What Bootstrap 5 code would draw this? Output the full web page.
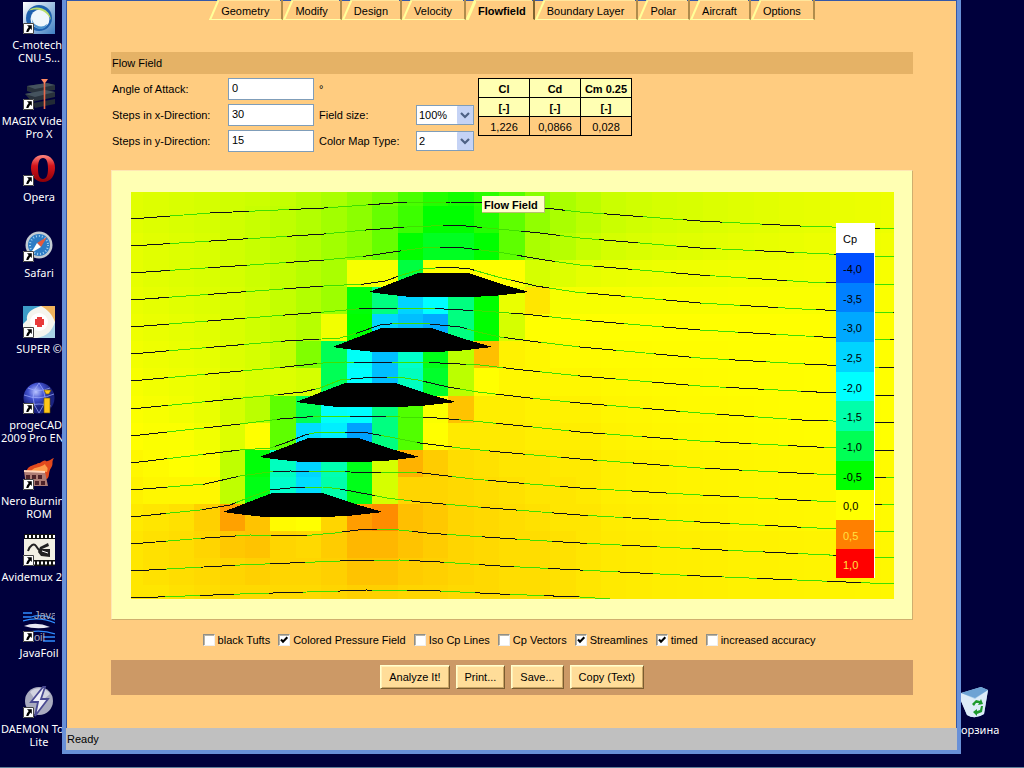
<!DOCTYPE html>
<html lang="en">
<head>
<meta charset="utf-8">
<meta name="viewport" content="width=device-width, initial-scale=1">
<title>JavaFoil - Flowfield</title>
<link href="https://cdn.jsdelivr.net/npm/bootstrap@5.3.0/dist/css/bootstrap.min.css" rel="stylesheet">
<style>
body { background: #00003c; color: #000; font: 11px/13px "Liberation Sans", Arial, sans-serif; }
.desk-col { flex: 0 0 62px; padding-top: 2px; }
.desk-item { width: 76px; height: 76px; color: #fff; text-decoration: none; text-align: center; font-family: "Noto Sans", sans-serif; white-space: nowrap; margin-left: 1px; }
.desk-item svg { width: 32px; height: 32px; display: block; margin: 0 auto 4px; }
.desk-item .run-on { display: block; width: 61px; text-align: right; }
.desk-right { flex: 0 0 63px; }
.desk-right .desk-item { width: 63px; margin-left: 0; text-align: left; }
.desk-right .desk-item svg { margin-left: 0; }
.app-window { background: #ffcc80; border: 4px double #5b85d6; border: 4px solid #6890d8; border-top: 0; box-shadow: inset 0 0 0 1px #3558a8; margin-bottom: 13px; }
.task-edge { height: 2px; background: #5f7f99; }
.inner { padding: 0 44px 0 45px; }
.tab-item { position: relative; display: block; height: 20px; padding: 5px 12px 0 12px; color: #000; text-decoration: none; border-bottom: 1px solid #ffffa8; border-right: 2px solid #b08c4c; }
.tab-item svg { position: absolute; left: 0; top: 0; width: 10px; height: 20px; }
.tab-item::before { content: ""; position: absolute; left: 10px; right: 1px; top: 0; height: 1px; background: #ffe69c; }
.tab-item.current { font-weight: bold; padding-right: 7px; border-right-color: #7e6430; border-bottom-color: #ffcc80; }
.section-bar { background: #e5b266; height: 22px; line-height: 22px; padding-left: 1px; margin: 32px 0 4px; font-weight: normal; font-size: 11px; }
.form-grid { display: grid; grid-template-columns: 117px 86px 102px 58px; grid-auto-rows: 22px; row-gap: 4px; align-items: center; }
.form-grid label { padding-left: 1px; }
.form-grid .second { padding-left: 5px; }
.box { background: #fff; border: 1px solid #7f9db9; border-radius: 0; height: 22px; width: 100%; padding: 0 3px 2px; color: #000; font: inherit; appearance: none; }
.pick { position: relative; }
.pick .box { height: 20px; padding: 0 2px; }
.pick svg { position: absolute; right: 1px; top: 1px; width: 16px; height: 18px; pointer-events: none; }
.coef { border-collapse: collapse; margin: 0 0 0 4px; text-align: center; }
.coef th, .coef td { border: 1px solid #000; height: 19px; width: 51px; padding: 2px 0 0; line-height: 13px; white-space: nowrap; }
.coef th { background: #ffffb3; }
.plot-panel { background: #ffffb3; border: 1px solid #ffe6b3; border-right-color: #cfae6e; border-bottom-color: #cfae6e; padding: 21px 18px 20px 19px; margin-top: 18px; }
.plot-area { position: relative; }
.plot-area > svg { display: block; width: 100%; height: auto; }
.plot-title { position: absolute; left: 46%; top: 4px; height: 17px; line-height: 19px; width: 63px; padding-left: 2px; font-weight: bold; font-size: 11px; background: #ffffcc; border-bottom: 1px solid #b8c070; border-right: 1px solid #b8c070; margin: 0; }
.legend-box { position: absolute; right: 19px; top: 31px; width: 39px; border-right: 1px solid #fff; background: #fff; }
.legend-box li { height: 30px; line-height: 33px; padding-left: 7px; }
.legend-box li:nth-child(3n), .legend-box li:nth-child(11) { height: 29px; }
.legend-box .hot { color: #ffe040; }
.checks { gap: 8px; height: 40px; padding-right: 6px; }
.checks label { display: flex; align-items: center; gap: 3px; }
.tick { appearance: none; width: 12px; height: 12px; margin: 0; background: #fff; border: 1px solid #8f8f88; border-right-color: #eee; border-bottom-color: #eee; box-shadow: inset 1px 1px #b8b4a8; }
.tick:checked { background: #fff url("data:image/svg+xml,%3Csvg xmlns='http://www.w3.org/2000/svg' viewBox='0 0 10 10'%3E%3Cpath d='M2 4.5 4 6.7 8.3 2.2' fill='none' stroke='%23000' stroke-width='2.1'/%3E%3C/svg%3E") center / 10px 10px no-repeat; }
.button-bar { background: #cc9966; height: 35px; gap: 6px; padding-top: 5px; }
.push { height: 24px; padding: 0 8px; font: inherit; color: #000; background: #ffdd99; border: 1px solid; border-color: #ffffcc #7a5c30 #7a5c30 #ffffcc; border-radius: 0; box-shadow: inset 1px 1px #fff0b8, inset -1px -1px #c9a566; }
.status { background: #c0c0c0; height: 22px; line-height: 22px; padding-left: 1px; margin-top: 33px; }
</style>
</head>
<body>
<svg class="d-none" aria-hidden="true">
  <symbol id="shortcut" viewBox="0 0 11 11"><rect width="11" height="11" fill="#fff"/><path d="M.5.5h10v10H.5z" fill="none" stroke="#444"/><path d="M4 2.2h4.8V7L7.300 5.500 5.300 9H3.200l.8-2.500 1.700-2.600z" fill="#000"/></symbol>
</svg>
<div class="d-flex flex-column min-vh-100">
<div class="d-flex flex-fill">
  <nav class="desk-col overflow-hidden" aria-label="Desktop">
    <a class="desk-item d-block" href="#"><svg viewBox="0 0 32 32"><defs><linearGradient id="g1" x2="1" y2="1"><stop stop-color="#fff"/><stop offset="1" stop-color="#3f7fc4"/></linearGradient></defs><rect width="32" height="32" fill="url(#g1)"/><circle cx="16" cy="16" r="13" fill="#1d5fae"/><circle cx="17" cy="17" r="9.500" fill="#eef6fb"/><path d="M5 9a14 14 0 0 1 23 9C24 9 15 5 5 9z" fill="#b9dd6a"/><path d="M9 14a9 9 0 0 0 15 8c-1 8-17 7-15-8z" fill="#4b93cf"/><use href="#shortcut" y="21" width="11" height="11"/></svg><span class="run-on">C-motech</span>CNU-5...</a>
    <a class="desk-item d-block" href="#"><svg viewBox="0 0 32 32"><path d="M4 8l20-3 8 2v5L10 15l-6-2zM2 16l20-4 10 2v5L9 24z" fill="#29323c"/><path d="M4 8l20-3 8 2-20 4zM2 16l20-4 10 2-20 5z" fill="#45535e"/><path d="M10 25l22-4v5l-20 4z" fill="#222a35"/><path d="M21.500 5v26" stroke="#e8694a" stroke-width="1.600"/><path d="M18 1h7l-3.500 5z" fill="#ff8a63"/><use href="#shortcut" y="21" width="11" height="11"/></svg><span class="run-on">MAGIX Vide</span>Pro X</a>
    <a class="desk-item d-block" href="#"><svg viewBox="0 0 32 32"><defs><linearGradient id="g3" x2="0" y2="1"><stop stop-color="#ff8a82"/><stop offset=".4" stop-color="#d4151c"/><stop offset="1" stop-color="#8b0008"/></linearGradient></defs><path fill-rule="evenodd" d="M20 1c8 0 12 6 12 13s-4 14-12 14S8 21 8 14 12 1 20 1zm0 3c-3.500 0-5 4-5 10.500S16.500 25 20 25s5-4 5-10.500S23.500 4 20 4z" fill="url(#g3)"/><use href="#shortcut" y="21" width="11" height="11"/></svg>Opera</a>
    <a class="desk-item d-block" href="#"><svg viewBox="0 0 32 32"><circle cx="16" cy="15" r="13.500" fill="#c3cbd2"/><circle cx="16" cy="15" r="11" fill="#2d7cc4"/><circle cx="16" cy="15" r="9" fill="none" stroke="#9fd0f2" stroke-dasharray="1 2" stroke-width="2"/><path d="M24 7l-6 10-4-4z" fill="#e45a3c"/><path d="M8 23l6-10 4 4z" fill="#fff"/><use href="#shortcut" y="21" width="11" height="11"/></svg>Safari</a>
    <a class="desk-item d-block" href="#"><svg viewBox="0 0 32 32"><rect width="32" height="32" fill="#f5f5ee"/><path d="M0 0h18C8 3 3 7 4 14L0 18z" fill="#3d9cc8"/><path d="M18 0h14v16C29 8 25 4 18 0z" fill="#f0b35c"/><path d="M32 16v16H14c10-2 15-7 18-16z" fill="#a9d3e6"/><circle cx="16" cy="16" r="9" fill="#fff"/><path d="M14 11h5v2h2v6h-2v2h-5v-2h-2v-6h2z" fill="#e83b3b"/><use href="#shortcut" y="21" width="11" height="11"/></svg><span class="run-on">SUPER ©</span></a>
    <a class="desk-item d-block" href="#"><svg viewBox="0 0 32 32"><defs><radialGradient id="g6" cx=".4" cy=".3"><stop stop-color="#b9c4ff"/><stop offset=".5" stop-color="#4353d0"/><stop offset="1" stop-color="#1a2280"/></radialGradient></defs><circle cx="16" cy="16" r="15.500" fill="url(#g6)"/><path d="M1 13q15 6 30-1M4 24q12-4 24 0M16 1q-12 14 0 30M16 1q12 14 0 30M5 6q11 5 22 0" fill="none" stroke="#a3b0ff" stroke-width=".7"/><path d="M21 8h7l-2 4h-3zM21 16h6v15h-6z" fill="#ffc61a" stroke="#6a5000" stroke-width=".6"/><use href="#shortcut" y="21" width="11" height="11"/></svg><span class="run-on">progeCAD</span><span class="run-on">2009 Pro EN</span></a>
    <a class="desk-item d-block" href="#"><svg viewBox="0 0 32 32"><path d="M3 16C4 6 12 8 15 5c3 1 5-4 8-2 2 1 5-2 8-3-3 4 0 6-3 10s-1 9-4 11z" fill="#e2491d"/><path d="M8 13c4-5 10-3 14-7 1 4 4 2 2 8z" fill="#ff9c4a"/><path d="M1 13l21 1 3 14H3z" fill="#ad7c74"/><path d="M3 17h4v4H3zM9 17h4v4H9zM15 17h4v4h-4zM12 23h4v4h-4zM18 23h4v4h-4z" fill="#4d2228"/><path d="M1 13l21 1" stroke="#ffd5ba" stroke-width="2"/><use href="#shortcut" y="21" width="11" height="11"/></svg><span class="run-on">Nero Burnin</span>ROM</a>
    <a class="desk-item d-block" href="#"><svg viewBox="0 0 32 32"><rect x="1" width="31" height="32" fill="#111"/><rect x="1" y="5" width="31" height="21" fill="#f2f0e4"/><path d="M2 2.500h30M2 29h30" stroke="#fff" stroke-width="3" stroke-dasharray="2 2"/><path d="M5 17c2-6 6-8 8-5s4 7 8 4" fill="none" stroke="#222" stroke-width="2"/><path d="M17 13l8-4 1 3-7 3h8v8l-9-1-3-4z" fill="#222"/><path d="M19 17l6 2" stroke="#fff"/><use href="#shortcut" y="21" width="11" height="11"/></svg><span class="run-on">Avidemux 2</span></a>
    <a class="desk-item d-block" href="#"><svg viewBox="0 0 32 32"><path d="M0 3h9M0 7h8Q20 3 32 10M0 11q16-5 32 2M0 23q18-4 32 1M20 27h12M20 31h12" fill="none" stroke="#2f8cff" stroke-width="1.300"/><text x="11" y="9" font-size="11" fill="#aab" font-family="Liberation Sans">Java</text><path d="M1 16q12-5 26 1-14 3-26-1z" fill="#e8e8f4"/><text x="11" y="31" font-size="11" fill="#aab" font-family="Liberation Sans">oil</text><use href="#shortcut" y="21" width="11" height="11"/></svg>JavaFoil</a>
    <a class="desk-item d-block" href="#"><svg viewBox="0 0 32 32"><circle cx="16" cy="15" r="14" fill="#a9abbf"/><path d="M7 6a13 13 0 0 1 20 2L15 18z" fill="#d3d4e0"/><path d="M20 1L8 16h7l-3 14L25 13h-7l4-12z" fill="#efeff8" stroke="#4a4a92" stroke-width="1.800"/><use href="#shortcut" y="21" width="11" height="11"/></svg><span class="run-on">DAEMON To</span>Lite</a>
  </nav>

  <main class="app-window flex-fill d-flex flex-column">
    <div class="inner flex-fill">
      <nav class="d-flex justify-content-center" id="tabs" aria-label="Sections">
        <a class="tab-item" href="#">Geometry</a>
        <a class="tab-item" href="#">Modify</a>
        <a class="tab-item" href="#">Design</a>
        <a class="tab-item" href="#">Velocity</a>
        <a class="tab-item current" href="#" aria-current="page">Flowfield</a>
        <a class="tab-item" href="#">Boundary Layer</a>
        <a class="tab-item" href="#">Polar</a>
        <a class="tab-item" href="#">Aircraft</a>
        <a class="tab-item" href="#">Options</a>
      </nav>
      <h1 class="section-bar">Flow Field</h1>
      <div class="d-flex align-items-start">
        <div class="form-grid">
          <label for="aoa">Angle of Attack:</label><input class="box" id="aoa" value="0"><span class="second">°</span><span></span>
          <label for="nx">Steps in x-Direction:</label><input class="box" id="nx" value="30">
          <label class="second" for="size">Field size:</label>
          <span class="pick"><select class="box" id="size"><option>100%</option></select><svg viewBox="0 0 16 18"><rect width="16" height="18" rx="1" fill="#c5d3f5"/><path d="M4 7l4 4 4-4" fill="none" stroke="#4d6185" stroke-width="2.200"/></svg></span>
          <label for="ny">Steps in y-Direction:</label><input class="box" id="ny" value="15">
          <label class="second" for="map">Color Map Type:</label>
          <span class="pick"><select class="box" id="map"><option>2</option></select><svg viewBox="0 0 16 18"><rect width="16" height="18" rx="1" fill="#c5d3f5"/><path d="M4 7l4 4 4-4" fill="none" stroke="#4d6185" stroke-width="2.200"/></svg></span>
        </div>
        <table class="coef">
          <thead><tr><th>Cl</th><th>Cd</th><th>Cm 0.25</th></tr><tr><th>[-]</th><th>[-]</th><th>[-]</th></tr></thead>
          <tbody><tr><td>1,226</td><td>0,0866</td><td>0,028</td></tr></tbody>
        </table>
      </div>

      <section class="plot-panel">
        <div class="plot-area">
          <svg id="field" viewBox="131 192 763 407" shape-rendering="crispEdges" role="img" aria-label="Pressure field with streamlines"></svg>
          <h2 class="plot-title">Flow Field</h2>
          <ul class="legend-box list-unstyled m-0" id="legend"></ul>
        </div>
      </section>

      <div class="checks d-flex justify-content-center align-items-center">
        <label><input class="tick" type="checkbox">black Tufts</label>
        <label><input class="tick" type="checkbox" checked>Colored Pressure Field</label>
        <label><input class="tick" type="checkbox">Iso Cp Lines</label>
        <label><input class="tick" type="checkbox">Cp Vectors</label>
        <label><input class="tick" type="checkbox" checked>Streamlines</label>
        <label><input class="tick" type="checkbox" checked>timed</label>
        <label><input class="tick" type="checkbox">increased accuracy</label>
      </div>
      <div class="button-bar d-flex justify-content-center">
        <button class="push" type="button">Analyze It!</button>
        <button class="push" type="button">Print...</button>
        <button class="push" type="button">Save...</button>
        <button class="push" type="button">Copy (Text)</button>
      </div>
    </div>
    <footer class="status">Ready</footer>
  </main>

  <aside class="desk-col desk-right d-flex flex-column justify-content-end overflow-hidden" aria-label="Desktop">
    <a class="desk-item d-block mb-1" href="#"><svg viewBox="0 0 32 32"><path d="M0 6L20 0l7 3-4 24q-9 6-17 1L0 14z" fill="#a9cdea"/><path d="M0 6l14 6 13-9-4 24q-9 6-17 1L0 14z" fill="#dcecf8"/><path d="M0 6L20 0l7 3-13 8z" fill="#6da3d4"/><path d="M11 17l4-4 4 1 1-2 2 5-5 1 1-2h-3l-2 3zM22 19l-1 6-5 2v2l-4-4 4-3v2l3-1 1-4z" fill="#1d9a2c"/></svg>орзина</a>
  </aside>
</div>
<div class="task-edge"></div>
</div>

<script src="https://cdn.jsdelivr.net/npm/bootstrap@5.3.0/dist/js/bootstrap.bundle.min.js"></script>
<script>
const NS = 'http://www.w3.org/2000/svg';
const field = document.getElementById('field');
function add(parent, name, attrs) {
  const el = document.createElementNS(NS, name);
  for (const k in attrs) el.setAttribute(k, attrs[k]);
  parent.appendChild(el);
}
// Hue of each field cell; the last number is the hue reached at the right edge.
const hues = [
  [67,68,69,70,71,72,74,77,80,86,92,103,112,116,110,100,88,80,76,64],
  [67,68,69,70,71,73,75,78,82,87,96,106,120,120,112,98,86,80,76,64],
  [66,67,68,69,71,73,75,78,82,87,96,120,128,128,120,98,80,77,73,63],
  [66,67,68,69,70,72,74,77,80,62,62,135,60,60,60,60,70,68,66,62],
  [65,66,67,68,69,71,74,78,83,122,150,190,180,150,120,65,54,62,62,61],
  [64,65,66,67,69,71,73,77,63,120,190,195,200,150,120,70,60,60,60,60],
  [63,64,65,66,68,70,74,90,140,178,195,168,126,76,45,57,58,59,59,60],
  [62,63,64,65,67,69,68,70,140,180,195,165,130,76,60,58,58,58,58,60],
  [61,62,63,65,70,76,98,140,178,180,150,101,61,46,56,56,57,57,57,60],
  [60,61,61,63,68,60,98,188,184,202,150,101,60,55,55,55,56,56,56,60],
  [58,59,60,61,75,122,165,190,162,126,70,42,48,52,53,54,54,55,55,59],
  [57,58,58,58,75,125,168,188,160,126,70,50,50,51,52,53,54,54,55,59],
  [55,54,53,49,38,46,59,60,50,37,33,45,47,50,51,52,53,54,54,59],
  [54,53,52,50,47,46,50,51,48,43,43,46,48,50,51,52,52,53,54,58],
  [54,53,52,51,50,49,50,50,49,46,46,48,49,50,51,52,52,53,54,58],
  [54,54,53,52,51,51,51,51,50,49,49,50,50,51,51,52,52,53,54,58]
];
const dx = 763 / 30, dy = 407 / 15;
hues.forEach((row, r) => {
  const y0 = Math.round(r ? 192 + dy * (r - 0.5) : 192), y1 = Math.round(Math.min(599, 192 + dy * (r + 0.5)));
  for (let c = 0; c <= 30; c++) {
    const x0 = Math.floor(c ? 131 + dx * (c - 0.5) : 131), x1 = Math.floor(Math.min(894, 131 + dx * (c + 0.5)));
    const far = Math.sqrt(Math.max(0, c - 18) / 12);
    const h = c < 19 ? row[c] : row[18] + (row[19] - row[18]) * far;
    add(field, 'rect', { x: x0, y: y0, width: x1 - x0, height: y1 - y0, fill: `hsl(${h},100%,50%)` });
  }
});
const lines = [
  '131,219 210,213 324,208 366,205 407,202 450,202 483,203 545,208 580,212 700,221 800,226 894,229',
  '131,246 324,234 366,230 407,227 455,225 498,229 540,233 580,238 700,248 807,253 894,257',
  '131,273 324,260 366,256 407,250 430,247 455,247 498,252 545,260 580,265 700,275 808,282 894,285',
  '131,300 324,286 364,284 385,281 402,275 423,269 447,267 470,269 498,277 536,286 575,292 700,303 802,309 894,313',
  '131,327 324,312 346,310 367,308 425,308 482,311 523,314 580,320 700,330 823,337 894,340',
  '131,354 285,341 340,338 360,332 380,325 400,323 420,323 460,327 478,332 500,337 530,341 580,347 700,358 805,364 894,368',
  '131,381 285,367 323,363 345,362 440,363 480,365 523,370 580,376 700,386 894,396',
  '131,409 284,394 303,392 320,388 340,380 374,377 398,377 418,380 435,384 448,387 478,392 530,398 580,403 700,413 802,420 894,423',
  '131,436 240,424 280,419 320,416 400,417 437,418 473,421 523,426 580,432 700,441 894,451',
  '131,463 240,450 270,448 285,443 305,435 318,432 362,432 390,437 420,443 460,448 500,452 580,459 700,468 894,478',
  '131,490 205,484 240,476 270,472 290,471 350,472 422,473 473,479 530,484 580,488 700,495 894,505',
  '131,517 200,510 230,505 245,499 270,490 290,488 323,487 340,489 372,495 387,498 420,502 490,508 580,515 700,522 894,532',
  '131,544 205,538 250,535 300,536 335,533 350,531 366,529 390,529 427,533 470,536 530,540 580,543 700,549 894,558',
  '131,571 240,565 340,561 400,560 440,562 500,566 580,570 700,576 894,584',
  '131,598 240,594 340,591 366,590 440,591 500,594 580,597 610,599'
];
lines.forEach((points, i) => {
  const step = 39.5 - i * 0.36;
  add(field, 'polyline', { points, fill: 'none', stroke: '#3fe000' });
  add(field, 'polyline', { points, fill: 'none', stroke: '#101018', 'stroke-dasharray': `${step} ${step}` });
});
// Five identical aerofoil sections, each one step down and to the left.
for (let i = 0; i < 5; i++) {
  const x = 369 - 36.500 * i, y = 292 + 55 * i;
  add(field, 'polygon', { points: [[0,0],[49,-19],[99,-19],[132,-8],[160,0],[125,4],[99,5],[42,5],[14,2]].map(p => (x + p[0]) + ',' + (y + p[1])).join(' '), fill: '#000' });
}
const legend = [['Cp','#fff'],['-4,0','#0050ff'],['-3,5','#0080ff'],['-3,0','#00a8ff'],['-2,5','#00d4ff'],['-2,0','#00ffff'],['-1,5','#00ffaa'],['-1,0','#00ff55'],['-0,5','#00ff00'],['0,0','#ffff00'],['0,5','#ff8000'],['1,0','#ff0000']];
legend.forEach(([text, color], i) => {
  const li = document.createElement('li');
  li.textContent = text;
  li.style.background = color;
  if (i > 9) li.className = 'hot';
  document.getElementById('legend').appendChild(li);
});
// Slanted left edge of every tab.
document.querySelectorAll('.tab-item').forEach(tab => {
  const s = document.createElementNS(NS, 'svg');
  s.setAttribute('viewBox', '0 0 10 20');
  add(s, 'path', { d: 'M1 20L9.500 0', fill: 'none', stroke: '#ffff99', 'stroke-width': tab.classList.contains('current') ? 3 : 2 });
  tab.prepend(s);
});
</script>
</body>
</html>
